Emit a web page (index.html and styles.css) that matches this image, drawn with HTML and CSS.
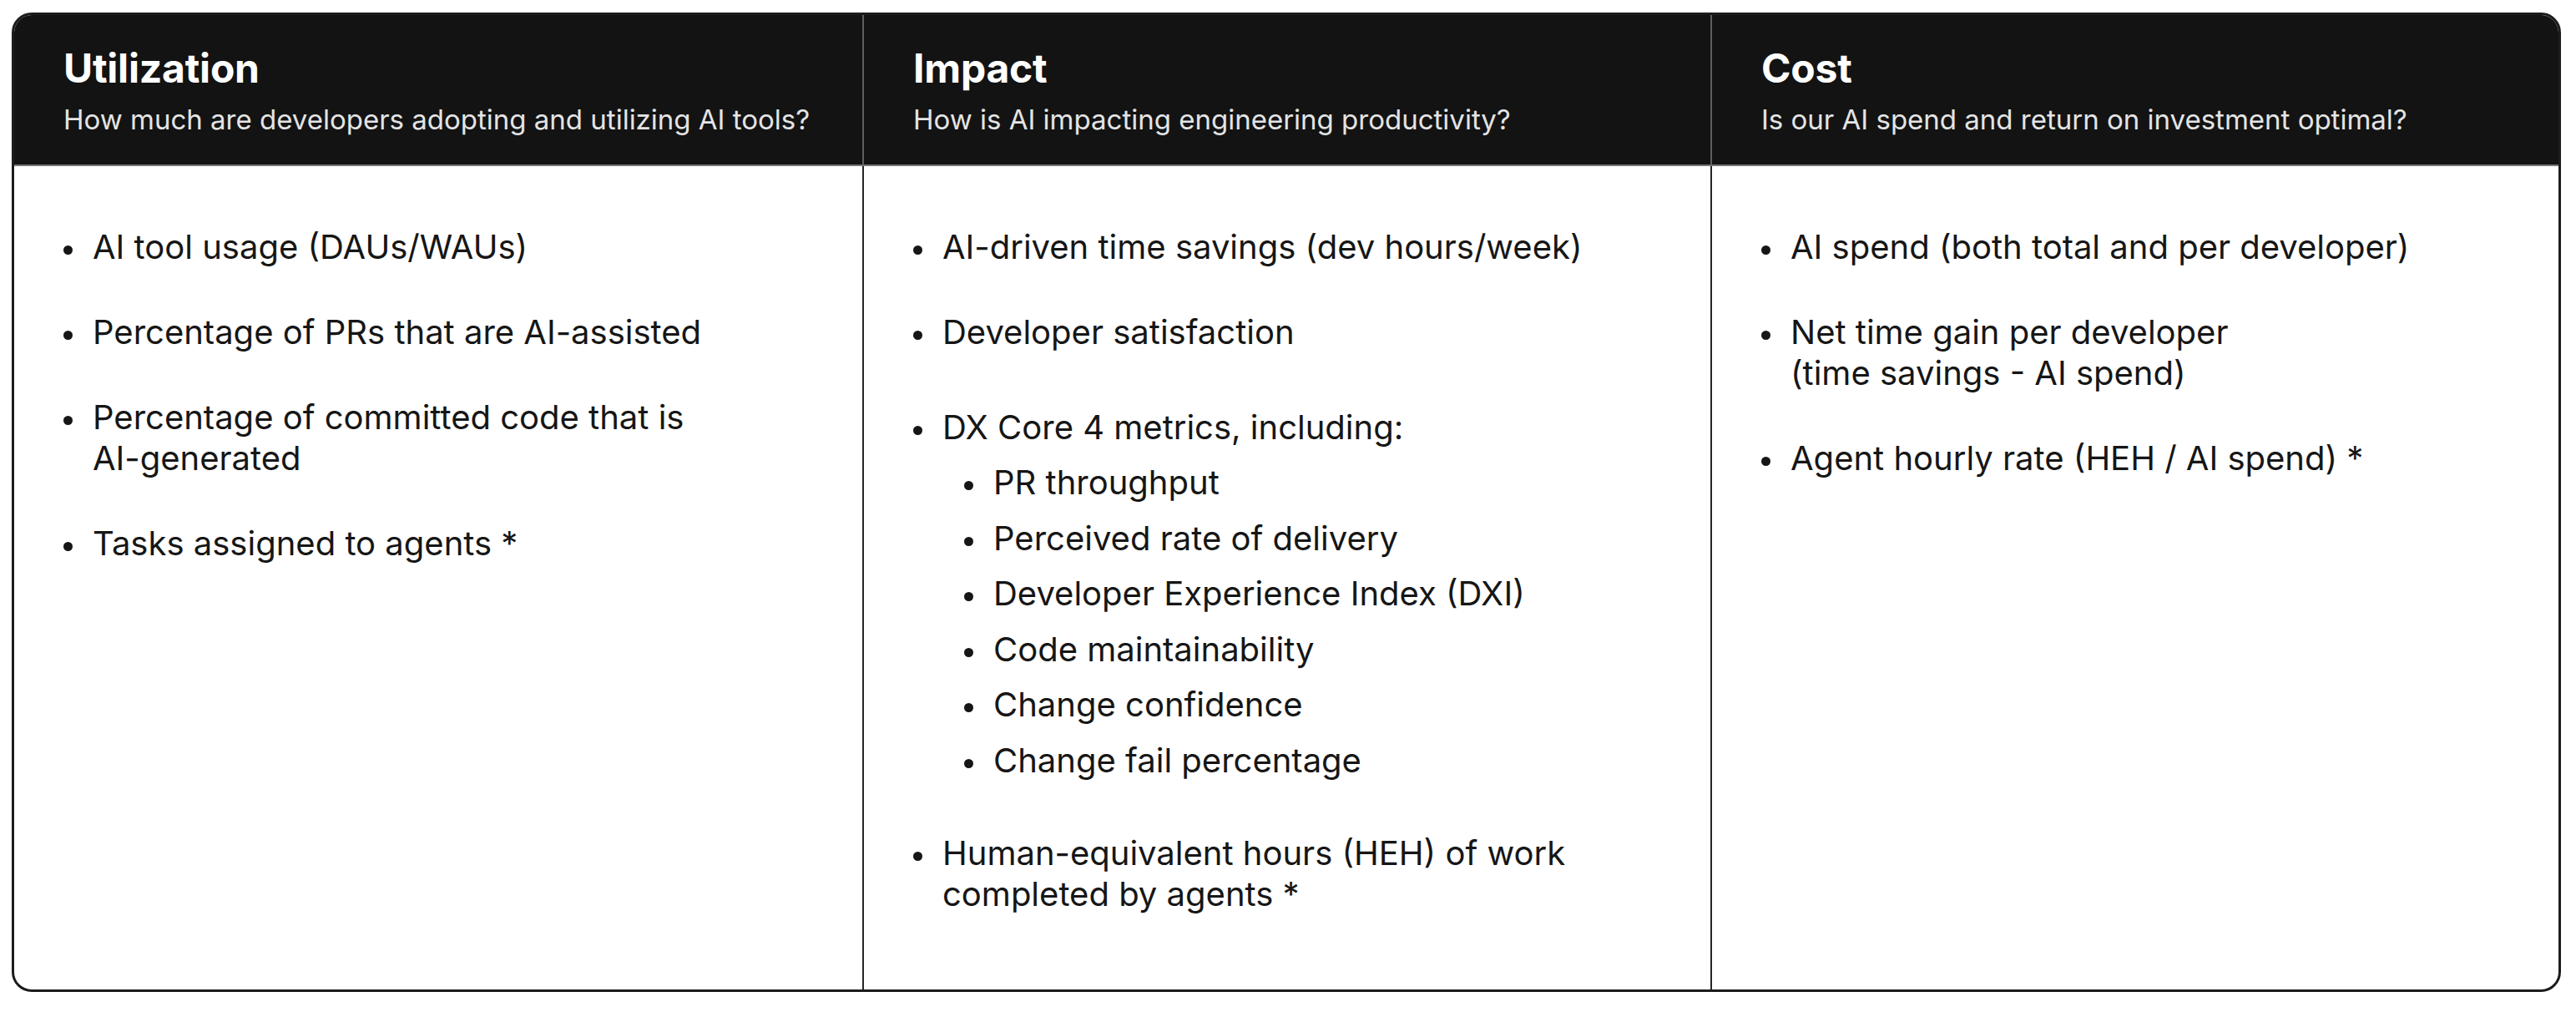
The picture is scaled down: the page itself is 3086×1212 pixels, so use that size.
FILE: index.html
```html
<!DOCTYPE html>
<html lang="en">
<head>
<meta charset="utf-8">
<title>AI measurement framework</title>
<link rel="stylesheet" href="styles.css">
</head>
<body>
<div class="card">
  <section class="col">
    <header class="head">
      <h2 class="title">Utilization</h2>
      <p class="sub-title">How much are developers adopting and utilizing AI tools?</p>
    </header>
    <div class="body">
      <ul class="list">
        <li><span class="txt">AI tool usage (DAUs/WAUs)</span></li>
        <li><span class="txt">Percentage of PRs that are AI-assisted</span></li>
        <li><span class="txt">Percentage of committed code that is <span class="nowrap">AI-generated</span></span></li>
        <li><span class="txt">Tasks assigned to agents *</span></li>
      </ul>
    </div>
  </section>
  <section class="col">
    <header class="head">
      <h2 class="title">Impact</h2>
      <p class="sub-title">How is AI impacting engineering productivity?</p>
    </header>
    <div class="body">
      <ul class="list">
        <li><span class="txt">AI-driven time savings (dev hours/week)</span></li>
        <li><span class="txt">Developer satisfaction</span></li>
        <li class="nested"><span class="txt">DX Core 4 metrics, including:</span>
          <ul class="list sublist">
            <li><span class="txt">PR throughput</span></li>
            <li><span class="txt">Perceived rate of delivery</span></li>
            <li><span class="txt">Developer Experience Index (DXI)</span></li>
            <li><span class="txt">Code maintainability</span></li>
            <li><span class="txt">Change confidence</span></li>
            <li><span class="txt">Change fail percentage</span></li>
          </ul>
        </li>
        <li><span class="txt">Human-equivalent hours (HEH) of work completed by agents *</span></li>
      </ul>
    </div>
  </section>
  <section class="col">
    <header class="head">
      <h2 class="title">Cost</h2>
      <p class="sub-title">Is our AI spend and return on investment optimal?</p>
    </header>
    <div class="body">
      <ul class="list">
        <li><span class="txt">AI spend (both total and per developer)</span></li>
        <li><span class="txt">Net time gain per developer<br>(time savings - AI spend)</span></li>
        <li><span class="txt">Agent hourly rate (HEH / AI spend) *</span></li>
      </ul>
    </div>
  </section>
</div>
</body>
</html>
```
FILE: styles.css
```css
html, body {
  margin: 0;
  padding: 0;
  background: #ffffff;
}

body {
  font-family: "Inter", "Noto Sans", "Liberation Sans", sans-serif;
  color: #161616;
}

.card {
  box-sizing: border-box;
  margin: 15px 0 0 14px;
  width: 3054px;
  height: 1173px;
  border: 3px solid #1c1c1c;
  border-radius: 24px;
  overflow: hidden;
  display: grid;
  grid-template-columns: 1fr 1fr 1fr;
  background: #ffffff;
}

.col {
  display: flex;
  flex-direction: column;
  min-width: 0;
}

.head {
  box-sizing: border-box;
  height: 181px;
  padding: 35px 59px 0 59px;
  background: #131313;
  border-bottom: 2px solid #777777;
}

.col + .col .head {
  border-left: 2px solid #5e5e5e;
}

.title {
  margin: 0;
  font-size: 48px;
  line-height: 58px;
  font-weight: 700;
  color: #ffffff;
  letter-spacing: -0.2px;
}

.sub-title {
  margin: 10px 0 0 0;
  font-size: 33px;
  line-height: 44px;
  font-weight: 400;
  color: #e4e4e4;
}

.body {
  flex: 1;
  padding: 72px 60px 0 59px;
}

.col + .col .body {
  border-left: 2px solid #262626;
}

.list {
  list-style: none;
  margin: 0;
  padding: 0;
  font-size: 40px;
  line-height: 49px;
}

.list > li {
  display: grid;
  grid-template-columns: 11px 1fr;
  column-gap: 24px;
  margin-bottom: 53px;
}

.list > li::before {
  content: "";
  width: 11px;
  height: 11px;
  border-radius: 50%;
  background: #161616;
  margin-top: 23px;
  grid-column: 1;
  grid-row: 1;
}

.txt {
  grid-column: 2;
  grid-row: 1;
}

.list > li.nested {
  padding-top: 12px;
  margin-bottom: 62px;
}

.sublist {
  grid-column: 2;
  grid-row: 2;
  margin-top: 17px;
  padding-left: 26px;
}

.sublist > li {
  margin-bottom: 17.5px;
}

.sublist > li:last-child {
  margin-bottom: 0;
}

.nowrap {
  white-space: nowrap;
}
```
